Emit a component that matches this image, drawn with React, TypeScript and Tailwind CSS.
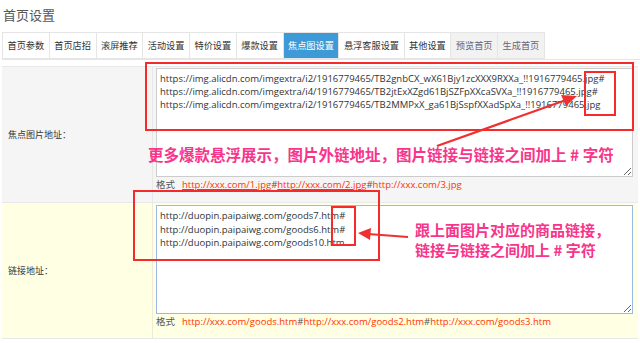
const tabs = [
  { label: '首页参数' },
  { label: '首页店招' },
  { label: '滚屏推荐' },
  { label: '活动设置' },
  { label: '特价设置' },
  { label: '爆款设置' },
  { label: '焦点图设置', active: true },
  { label: '悬浮客服设置' },
  { label: '其他设置' },
  { label: '预览首页', muted: true },
  { label: '生成首页', muted: true },
];

const focusUrls = [
  'https://img.alicdn.com/imgextra/i2/1916779465/TB2gnbCX_wX61Bjy1zcXXX9RXXa_!!1916779465.jpg#',
  'https://img.alicdn.com/imgextra/i4/1916779465/TB2jtExXZgd61BjSZFpXXcaSVXa_!!1916779465.jpg#',
  'https://img.alicdn.com/imgextra/i2/1916779465/TB2MMPxX_ga61BjSspfXXadSpXa_!!1916779465.jpg',
].join('\n');

const goodsUrls = [
  'http://duopin.paipaiwg.com/goods7.htm#',
  'http://duopin.paipaiwg.com/goods6.htm#',
  'http://duopin.paipaiwg.com/goods10.htm',
].join('\n');

const font = "font-['Open_Sans','Noto_Sans_CJK_SC',sans-serif]";

function FormatLine({ parts, underline }: { parts: string[]; underline?: boolean }) {
  return (
    <div className="flex items-center h-[16px] text-[9.5px] leading-[16px]">
      <span className="text-[#555] w-[26px]">格式</span>
      <span className="text-[#ff3300]">
        {parts.map((p, i) => (
          <span key={i}>
            {i > 0 && <span className="text-[#555]">#</span>}
            <span className={underline && i < 2 ? 'underline' : ''}>{p}</span>
          </span>
        ))}
      </span>
    </div>
  );
}

export default function App() {
  return (
    <div className={`relative w-[640px] h-[343px] overflow-hidden bg-white ${font}`}>
      <h1 className="pl-[3px] pt-[5px] h-[32px] text-[13px] leading-[20px] text-[#555]">首页设置</h1>

      {/* tabs */}
      <div className="flex ml-[2px] h-[28px] border-b border-[#e5e5e5]">
        {tabs.map((t) => (
          <div
            key={t.label}
            className={
              'flex items-center px-[4.5px] text-[9.2px] border border-[#e5e5e5] -ml-px first:ml-0 ' +
              (t.active
                ? 'bg-[#3d9ad6] text-white border-[#3d9ad6]'
                : t.muted
                ? 'bg-[#f2f2f2] text-[#667]'
                : 'bg-white text-[#333]')
            }
          >
            {t.label}
          </div>
        ))}
      </div>

      {/* form table */}
      <div className="mt-[6px] ml-[2px] mr-[2px] border-t border-[#e8e8e8]">
        <div className="flex bg-[#f5f5f5] h-[136px] border-b border-[#e8e8e8]">
          <div className="w-[151px] flex items-center pl-[6px] text-[9px] text-[#333] border-r border-[#e8e8e8]">
            焦点图片地址：
          </div>
          <div className="flex-1 pl-[3px] pt-[1px]">
            <textarea
              readOnly
              value={focusUrls}
              className="block w-[477px] h-[109px] bg-white border border-[#ccc] px-[3px] py-[3px] text-[9.5px] leading-[13px] text-[#333] outline-none resize whitespace-pre overflow-hidden font-['Open_Sans',sans-serif]"
            />
            <FormatLine parts={['http://xxx.com/1.jpg', 'http://xxx.com/2.jpg', 'http://xxx.com/3.jpg']} underline />
          </div>
        </div>
        <div className="flex bg-[#ffffe3] h-[136px] border-b border-[#e8e8e8]">
          <div className="w-[151px] flex items-center pl-[6px] text-[9px] text-[#333] border-r border-[#ececd8]">
            链接地址：
          </div>
          <div className="flex-1 pl-[3px] pt-[2px]">
            <textarea
              readOnly
              value={goodsUrls}
              className="block w-[477px] h-[109px] bg-white border border-[#9bb8e6] px-[3px] py-[3px] text-[9.5px] leading-[13.5px] text-[#333] outline-none resize whitespace-pre overflow-hidden font-['Open_Sans',sans-serif]"
            />
            <FormatLine parts={['http://xxx.com/goods.htm', 'http://xxx.com/goods2.htm', 'http://xxx.com/goods3.htm']} />
          </div>
        </div>
      </div>

      {/* annotations */}
      <div className="absolute left-[145px] top-[62px] w-[489px] h-[69px] border-2 border-[#f52a2a]" />
      <div className="absolute left-[584px] top-[71px] w-[32px] h-[45px] border-2 border-[#f52a2a]" />
      <div className="absolute left-[133px] top-[190px] w-[247px] h-[71px] border-2 border-[#f52a2a]" />
      <div className="absolute left-[331px] top-[206px] w-[25px] h-[40px] border-2 border-[#f52a2a]" />

      <svg className="absolute inset-0 pointer-events-none" width="640" height="343">
        <line x1="437" y1="146" x2="566" y2="100" stroke="#f03030" strokeWidth="2.2" />
        <polygon points="577,96 561,95 566,106" fill="#f03030" />
        <line x1="408" y1="237" x2="368" y2="234" stroke="#f03030" strokeWidth="2.2" />
        <polygon points="358,233 371,228 370,240" fill="#f03030" />
      </svg>

      <div className="absolute left-[148px] top-[145px] text-[15.5px] leading-[18px] font-bold text-[#f7358b] whitespace-nowrap font-['Noto_Sans_CJK_SC',sans-serif]">
        更多爆款悬浮展示，图片外链地址，图片链接与链接之间加上 # 字符
      </div>
      <div className="absolute left-[415px] top-[220px] text-[15px] leading-[20px] font-bold text-[#f7358b] whitespace-nowrap font-['Noto_Sans_CJK_SC',sans-serif]">
        <div>跟上面图片对应的商品链接，</div>
        <div>链接与链接之间加上 # 字符</div>
      </div>
    </div>
  );
}
